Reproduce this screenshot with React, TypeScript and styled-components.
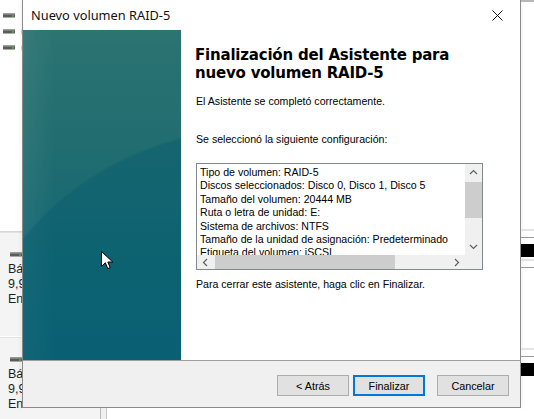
import React from 'react';
import styled, { createGlobalStyle } from 'styled-components';

const GlobalStyle = createGlobalStyle`
  html, body {
    margin: 0;
    padding: 0;
    background: #ffffff;
  }
  body {
    width: 534px;
    height: 419px;
    overflow: hidden;
    font-family: "Liberation Sans", Arial, sans-serif;
  }
`;

const summary = [
  'Tipo de volumen: RAID-5',
  'Discos seleccionados: Disco 0, Disco 1, Disco 5',
  'Tamaño del volumen: 20444 MB',
  'Ruta o letra de unidad: E:',
  'Sistema de archivos: NTFS',
  'Tamaño de la unidad de asignación: Predeterminado',
  'Etiqueta del volumen: iSCSI',
];

const Chevron = ({ dir }: { dir: 'up' | 'down' | 'left' | 'right' }) => {
  const rot = { up: 0, right: 90, down: 180, left: 270 }[dir];
  return (
    <svg width="9" height="9" viewBox="0 0 9 9">
      <path
        d="M1 6 L4.5 2.5 L8 6"
        fill="none"
        stroke="#606060"
        strokeWidth="1.2"
        transform={`rotate(${rot} 4.5 4.5)`}
      />
    </svg>
  );
};

const DriveIcon = () => (
  <IconSvg width="12" height="5" viewBox="0 0 12 5">
    <rect x="0" y="0.5" width="12" height="4" rx="0.5" fill="#5b5b5b" />
    <rect x="0" y="0.5" width="12" height="1.3" fill="#8a8a8a" />
    <rect x="9" y="2.3" width="2" height="1.4" fill="#3fc43f" />
  </IconSvg>
);

const App = () => {
  return (
    <Screen>
      <GlobalStyle />
      <LeftStrip>
        <DriveList>
          {[0, 1, 2].map((i) => (
            <DriveRow key={i}>
              <DriveIcon />
              <Paren>{i > 0 ? '(C:)' : ''}</Paren>
            </DriveRow>
          ))}
        </DriveList>
        <DiskBlock>
          <DiskIcon><DriveIcon /></DiskIcon>
          <DiskLine>Básico</DiskLine>
          <DiskLine>9,98 GB</DiskLine>
          <DiskLine>En línea</DiskLine>
        </DiskBlock>
        <DiskBlock $last>
          <DiskIcon><DriveIcon /></DiskIcon>
          <DiskLine>Básico</DiskLine>
          <DiskLine>9,98 GB</DiskLine>
          <DiskLine>En línea</DiskLine>
        </DiskBlock>
      </LeftStrip>

      <Middle>
        <Dialog>
          <TitleBar>
            <Title>Nuevo volumen RAID-5</Title>
            <CloseButton>
              <svg width="11" height="11" viewBox="0 0 11 11">
                <path d="M0.5 0.5 L10.5 10.5 M10.5 0.5 L0.5 10.5" stroke="#1a1a1a" strokeWidth="1" />
              </svg>
            </CloseButton>
          </TitleBar>
          <Body>
            <SidePanel />
            <Content>
              <Heading>
                Finalización del Asistente para
                <br />
                nuevo volumen RAID-5
              </Heading>
              <Text $top={13}>El Asistente se completó correctamente.</Text>
              <Text $top={25}>Se seleccionó la siguiente configuración:</Text>
              <ListBox>
                <ListText>
                  {summary.map((line) => (
                    <ListLine key={line}>{line}</ListLine>
                  ))}
                </ListText>
                <VScroll>
                  <ArrowCell><Chevron dir="up" /></ArrowCell>
                  <VTrack>
                    <VThumb />
                  </VTrack>
                  <ArrowCell><Chevron dir="down" /></ArrowCell>
                </VScroll>
                <HScroll>
                  <ArrowCell $flat><Chevron dir="left" /></ArrowCell>
                  <HTrack>
                    <HThumb />
                  </HTrack>
                  <ArrowCell $flat><Chevron dir="right" /></ArrowCell>
                </HScroll>
                <Corner />
              </ListBox>
              <Text $top={8}>Para cerrar este asistente, haga clic en Finalizar.</Text>
            </Content>
          </Body>
          <Footer>
            <Button>&lt; Atrás</Button>
            <Button $primary>Finalizar</Button>
            <Button $gap={12}>Cancelar</Button>
          </Footer>
        </Dialog>
        <BelowDialog>
          <BelowGray />
          <BelowWhite />
        </BelowDialog>
      </Middle>

      <RightStrip>
        <RightRule $top={227} />
        <BlackBar />
        <RightRule $top={2} />
        <RightRule $top={80} />
        <BlackBar />
      </RightStrip>

      <Cursor>
        <svg width="13" height="19" viewBox="0 0 13 19">
          <path
            d="M0.5 0.5 L0.5 15.5 L4.3 11.8 L6.8 17.6 L9.2 16.6 L6.8 11 L11.8 11 Z"
            fill="#ffffff"
            stroke="#000000"
            strokeWidth="1"
            strokeLinejoin="round"
          />
        </svg>
      </Cursor>
    </Screen>
  );
};

const Screen = styled.div`
  position: relative;
  display: flex;
  width: 534px;
  height: 419px;
  overflow: hidden;
  background: #ffffff;
`;

const IconSvg = styled.svg`
  display: block;
  flex-shrink: 0;
  min-width: 12px;
`;

const LeftStrip = styled.div`
  width: 22px;
  flex-shrink: 0;
  display: flex;
  flex-direction: column;
  overflow: hidden;
  font-family: "Liberation Sans", Arial, sans-serif;
  font-size: 12.5px;
  color: #1e1e1e;
`;

const DriveList = styled.div`
  height: 232px;
  padding-top: 9px;
  box-sizing: border-box;
  display: flex;
  flex-direction: column;
  gap: 3px;
  border-bottom: 1px solid #d6d6d6;
`;

const DriveRow = styled.div`
  height: 13px;
  display: flex;
  align-items: center;
  gap: 6px;
  padding-left: 3px;
  white-space: nowrap;
`;

const Paren = styled.span`
  flex-shrink: 0;
  font-size: 12px;
  line-height: 13px;
  color: #444;
`;

const DiskBlock = styled.div<{ $last?: boolean }>`
  height: ${(p) => (p.$last ? 'auto' : '105px')};
  flex: ${(p) => (p.$last ? 1 : 'none')};
  background: #f4f4f4;
  border-bottom: ${(p) => (p.$last ? 'none' : '1px solid #ffffff')};
  border-top: 1px solid #e2e2e2;
  padding: 17px 0 0 8px;
  box-sizing: border-box;
  white-space: nowrap;
`;

const DiskIcon = styled.div`
  height: 8px;
  padding-left: 2px;
  display: flex;
  align-items: center;
  margin-bottom: 4px;
`;

const DiskLine = styled.div`
  line-height: 15px;
`;

const Middle = styled.div`
  width: 499px;
  flex-shrink: 0;
  display: flex;
  flex-direction: column;
`;

const Dialog = styled.div`
  height: 408px;
  box-sizing: border-box;
  display: flex;
  flex-direction: column;
  background: #ffffff;
  border: 1px solid #8a8a8a;
  border-top: none;
  box-shadow: 0 0 6px rgba(0, 0, 0, 0.08);
`;

const TitleBar = styled.div`
  height: 30px;
  flex-shrink: 0;
  display: flex;
  align-items: center;
  justify-content: space-between;
  padding-left: 8px;
`;

const Title = styled.span`
  font-family: "Noto Sans", "Open Sans", sans-serif;
  font-size: 12.8px;
  color: #111111;
`;

const CloseButton = styled.div`
  width: 46px;
  height: 30px;
  display: flex;
  align-items: center;
  justify-content: center;
`;

const Body = styled.div`
  flex: 1;
  display: flex;
  min-height: 0;
`;

const SidePanel = styled.div`
  width: 158px;
  flex-shrink: 0;
  background:
    radial-gradient(ellipse 300px 250px at 250px 345px, rgba(6, 92, 110, 0.45) 99%, rgba(6, 92, 110, 0) 100%),
    linear-gradient(90deg, rgba(255, 255, 255, 0.06) 0%, rgba(255, 255, 255, 0) 20%),
    linear-gradient(180deg, #2c7372 0%, #216d70 35%, #136774 70%, #0d6477 100%);
`;

const Content = styled.div`
  flex: 1;
  padding: 16px 36px 0 15px;
  font-size: 10.6px;
  color: #000000;
`;

const Heading = styled.h1`
  margin: 0;
  font-family: "DejaVu Sans", Verdana, sans-serif;
  font-weight: bold;
  font-size: 15px;
  line-height: 18px;
  letter-spacing: -0.2px;
  color: #000000;
  margin-left: -1px;
`;

const Text = styled.p<{ $top: number }>`
  margin: ${(p) => p.$top}px 0 0;
  line-height: 13px;
  white-space: nowrap;
`;

const ListBox = styled.div`
  margin-top: 17px;
  width: 287px;
  height: 107px;
  box-sizing: border-box;
  border: 1px solid #828790;
  display: grid;
  grid-template-columns: 1fr 17px;
  grid-template-rows: 1fr 14px;
`;

const ListText = styled.div`
  padding: 2px 3px;
  overflow: hidden;
  white-space: nowrap;
`;

const ListLine = styled.div`
  line-height: 13.4px;
`;

const VScroll = styled.div`
  display: flex;
  flex-direction: column;
  background: #f0f0f0;
`;

const HScroll = styled.div`
  display: flex;
  background: #f0f0f0;
`;

const ArrowCell = styled.div<{ $flat?: boolean }>`
  width: 17px;
  height: ${(p) => (p.$flat ? '14px' : '17px')};
  flex-shrink: 0;
  display: flex;
  align-items: center;
  justify-content: center;
`;

const VTrack = styled.div`
  flex: 1;
  padding-top: 1px;
`;

const VThumb = styled.div`
  width: 17px;
  height: 36px;
  background: #cdcdcd;
`;

const HTrack = styled.div`
  flex: 1;
  padding-left: 1px;
  display: flex;
  align-items: center;
`;

const HThumb = styled.div`
  width: 180px;
  height: 14px;
  background: #cdcdcd;
`;

const Corner = styled.div`
  background: #f0f0f0;
`;

const Footer = styled.div`
  height: 47px;
  flex-shrink: 0;
  box-sizing: border-box;
  border-top: 1px solid #a0a0a0;
  background: #f0f0f0;
  display: flex;
  justify-content: flex-end;
  align-items: flex-start;
  padding: 14px 11px 0 0;
`;

const Button = styled.button<{ $primary?: boolean; $gap?: number }>`
  width: 72px;
  height: 21px;
  margin-left: ${(p) => (p.$gap ? `${p.$gap}px` : '4px')};
  padding: 0;
  box-sizing: border-box;
  background: #e1e1e1;
  border: ${(p) => (p.$primary ? '2px solid #0078d7' : '1px solid #adadad')};
  font-family: "Liberation Sans", Arial, sans-serif;
  font-size: 10.8px;
  color: #000000;
`;

const BelowDialog = styled.div`
  flex: 1;
  display: flex;
`;

const BelowGray = styled.div`
  width: 78px;
  background: #f4f4f4;
  border-right: 1px solid #b9b9b9;
`;

const BelowWhite = styled.div`
  flex: 1;
  background: #ffffff;
  border-left: 5px solid #f0f0f0;
  box-shadow: inset 1px 0 0 #c8c8c8;
`;

const RightStrip = styled.div`
  flex: 1;
  display: flex;
  flex-direction: column;
  border-top: 2px solid #b8b8b8;
`;

const RightRule = styled.div<{ $top: number }>`
  margin-top: ${(p) => p.$top}px;
  height: 6px;
  border-top: 2px solid #e4e4e4;
  border-bottom: 1px solid #9a9a9a;
`;

const BlackBar = styled.div`
  margin-top: 6px;
  height: 13px;
  background: #000000;
`;

const Cursor = styled.div`
  position: absolute;
  left: 101px;
  top: 251px;
  width: 13px;
  height: 19px;
  pointer-events: none;
`;

export default App;
